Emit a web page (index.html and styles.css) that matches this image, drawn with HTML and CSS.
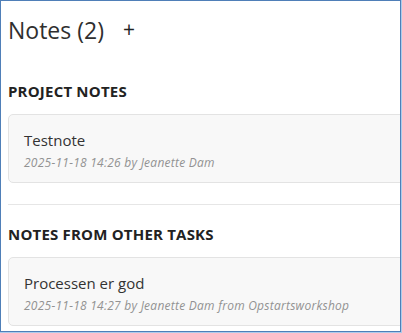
FILE: index.html
```html
<!DOCTYPE html>
<html lang="en">
<head>
    <meta charset="UTF-8">
    <meta name="viewport" content="width=device-width, initial-scale=1.0">
    <title>Notes</title>
    <link rel="stylesheet" href="styles.css">
</head>
<body>
    <div class="frame">
        <!-- Header -->
        <div class="notes-header">
            <h1>Notes (2)</h1>
            <span class="add-note">+</span>
        </div>

        <!-- Project notes -->
        <section class="notes-section">
            <h2>Project notes</h2>
            <div class="note-card">
                <div class="note-title">Testnote</div>
                <div class="note-meta">2025-11-18 14:26 by Jeanette Dam</div>
            </div>
        </section>

        <hr class="divider">

        <!-- Notes from other tasks -->
        <section class="notes-section">
            <h2>Notes from other tasks</h2>
            <div class="note-card">
                <div class="note-title">Processen er god</div>
                <div class="note-meta">2025-11-18 14:27 by Jeanette Dam from Opstartsworkshop</div>
            </div>
        </section>
    </div>
</body>
</html>
```

FILE: styles.css
```css
/* General */
body {
    margin: 0;
    padding: 0;
    background-color: #aecbeb;
    font-family: "Open Sans", "Noto Sans", sans-serif;
    color: #333;
}

.frame {
    width: 401px;
    height: 332px;
    box-sizing: border-box;
    border: 1px solid #4f7fb8;
    background-color: #fff;
    overflow: hidden;
    padding: 0 0 0 7px;
}

/* Header */
.notes-header {
    display: flex;
    align-items: center;
    gap: 19px;
    padding-top: 14px;
    height: 30px;
}

.notes-header h1 {
    margin: 0;
    font-size: 23px;
    font-weight: 400;
    line-height: 30px;
    color: #2f2f2f;
}

.add-note {
    font-size: 21px;
    line-height: 30px;
    color: #222;
    padding-bottom: 2px;
}

/* Sections */
.notes-section h2 {
    margin: 0;
    font-size: 15px;
    font-weight: 700;
    letter-spacing: 0.2px;
    text-transform: uppercase;
    line-height: 20px;
    color: #222;
}

.notes-section:first-of-type {
    padding-top: 36px;
}

.note-card {
    margin-top: 13px;
    margin-right: -30px;
    padding: 15px 15px 10px 15px;
    background-color: #f8f8f8;
    border: 1px solid #e3e3e3;
    border-radius: 5px;
}

.note-title {
    font-size: 15px;
    line-height: 20px;
    color: #333;
}

.note-meta {
    margin-top: 4px;
    font-size: 12px;
    font-style: italic;
    letter-spacing: 0.25px;
    line-height: 18px;
    color: #929292;
}

.divider {
    margin: 21px -20px 19px 0;
    border: 0;
    border-top: 1px solid #e6e6e6;
}
```
